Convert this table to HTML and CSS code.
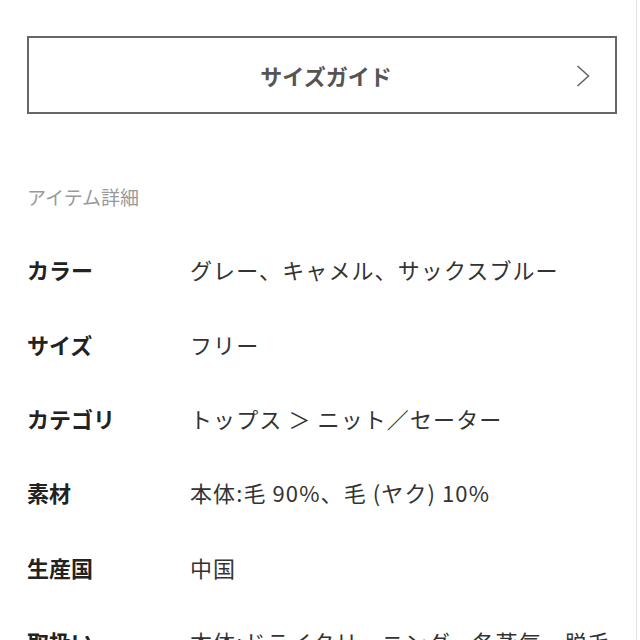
FILE: index.html
```html
<!DOCTYPE html>
<html lang="ja">
<head>
<meta charset="utf-8">
<link rel="stylesheet" href="styles.css">
</head>
<body>
<div class="page">
  <div class="guide-btn">
    <span class="guide-label">サイズガイド</span>
    <svg class="chev" width="14" height="22" viewBox="0 0 14 22"><polyline points="1.5,1 12.5,11 1.5,21" fill="none" stroke="#666" stroke-width="1.6"/></svg>
  </div>
  <h2 class="section-title">アイテム詳細</h2>
  <div class="details">
    <div class="row"><div class="label">カラー</div><div class="value">グレー、キャメル、サックスブルー</div></div>
    <div class="row"><div class="label">サイズ</div><div class="value">フリー</div></div>
    <div class="row"><div class="label">カテゴリ</div><div class="value">トップス ＞ ニット／セーター</div></div>
    <div class="row"><div class="label">素材</div><div class="value">本体:毛 90%、毛 (ヤク) 10%</div></div>
    <div class="row"><div class="label">生産国</div><div class="value">中国</div></div>
    <div class="row"><div class="label">取扱い</div><div class="value">本体:ドライクリーニング、各蒸気、脱毛</div></div>
  </div>
</div>
</body>
</html>
```
FILE: styles.css
```css
html, body {
  margin: 0;
  padding: 0;
  background: #fff;
  overflow: hidden;
}
body {
  font-family: "Noto Sans CJK JP", "Noto Sans", sans-serif;
  color: #222;
}
.page {
  width: 637px;
  height: 640px;
  border-right: 1px solid #e2e2e2;
  padding: 36px 0 0 27px;
  box-sizing: border-box;
  overflow: hidden;
}
.guide-btn {
  width: 590px;
  height: 78px;
  box-sizing: border-box;
  border: 2px solid #666;
  display: flex;
  align-items: center;
  justify-content: center;
  position: relative;
}
.guide-label {
  font-size: 22px;
  font-weight: 700;
  color: #555;
  padding-left: 8px;
  line-height: 1;
}
.chev {
  position: absolute;
  right: 25px;
  top: 27px;
}
.section-title {
  margin: 69px 0 0;
  font-size: 19px;
  font-weight: 400;
  color: #999;
  line-height: 28px;
  height: 28px;
}
.details {
  margin-top: 21px;
}
.row {
  display: flex;
  align-items: center;
  height: 74.4px;
}
.label {
  width: 163px;
  flex: none;
  font-size: 22px;
  font-weight: 700;
  color: #222;
}
.value {
  font-size: 22px;
  color: #333;
  white-space: nowrap;
  letter-spacing: 1.1px;
}
```
